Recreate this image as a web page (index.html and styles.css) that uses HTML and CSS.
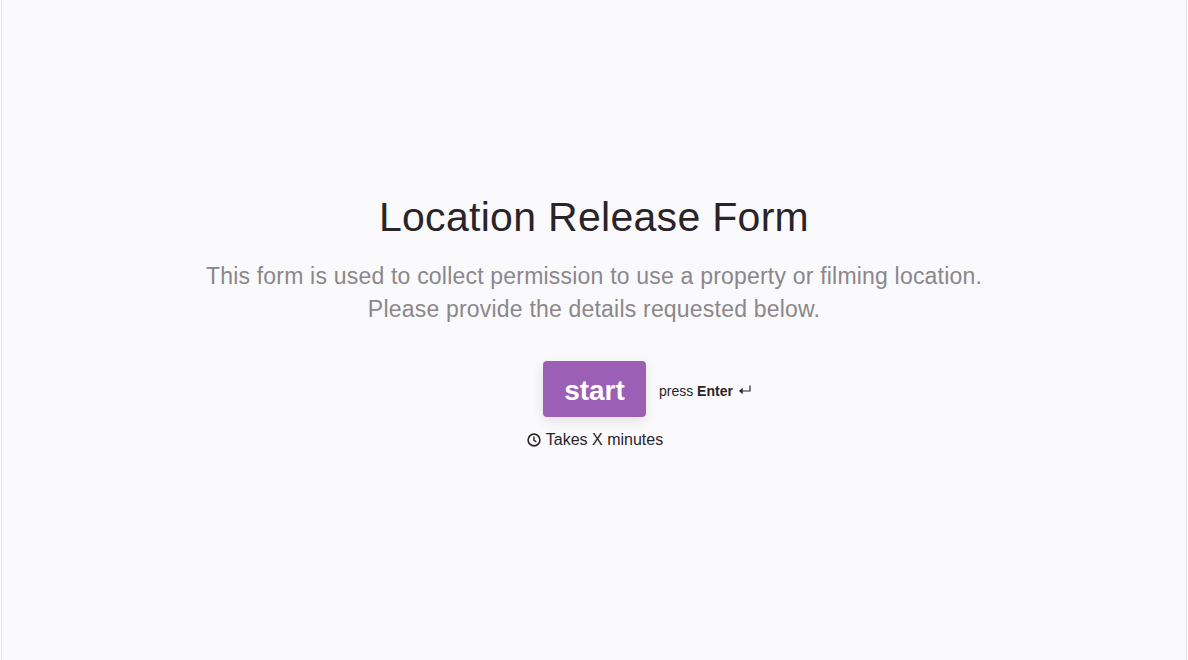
FILE: index.html
```html
<!DOCTYPE html>
<html lang="en">
<head>
    <meta charset="UTF-8">
    <title>Location Release Form</title>
    <link rel="stylesheet" href="styles.css">
</head>
<body>
    <div class="frame">
        <div class="welcome">
            <h1 class="title">Location Release Form</h1>
            <p class="description">This form is used to collect permission to use a property or filming location.<br>Please provide the details requested below.</p>
            <div class="action">
                <button class="start-btn" type="button">start</button>
                <div class="hint">
                    <span>press <b>Enter</b></span>
                    <svg class="enter-icon" width="13" height="11" viewBox="0 0 13 11" fill="none" stroke="#2a2328" stroke-width="1.2">
                        <path d="M12 0.5V6H2"/>
                        <path d="M4.6 2.8L1 6L4.6 9.2" fill="#2a2328" stroke="none"/>
                    </svg>
                </div>
            </div>
            <div class="time">
                <svg class="clock-icon" width="14" height="14" viewBox="0 0 14 14" fill="none" stroke="#2a2328" stroke-width="1.6">
                    <circle cx="7" cy="7" r="5.9"/>
                    <path d="M7 3.6V7.3L9.4 8.8" stroke-width="1.4"/>
                </svg>
                <span>Takes X minutes</span>
            </div>
        </div>
    </div>
</body>
</html>
```

FILE: styles.css
```css
* {
    margin: 0;
    padding: 0;
    box-sizing: border-box;
}

body {
    width: 100vw;
    height: 100vh;
    padding: 0 1px;
    background: #fafafc;
    font-family: "Liberation Sans", Arial, sans-serif;
    color: #2a2328;
    overflow: hidden;
}

.frame {
    width: 100%;
    height: 100%;
    padding-top: 192px;
    display: flex;
    justify-content: center;
    border-left: 1px solid #e6e6e9;
    border-right: 1px solid #e6e6e9;
}

.welcome {
    display: flex;
    flex-direction: column;
    align-items: center;
}

.title {
    font-size: 41px;
    line-height: 50px;
    font-weight: 400;
    letter-spacing: 0.3px;
}

.description {
    margin-top: 18px;
    font-size: 23px;
    line-height: 33px;
    letter-spacing: 0.2px;
    text-align: center;
    color: #8b878a;
}

.action {
    margin-top: 35px;
    margin-left: 1px;
    position: relative;
}

.start-btn {
    display: block;
    width: 103px;
    height: 56px;
    background: #9b60b5;
    border: none;
    border-radius: 4px;
    box-shadow: 0 4px 12px rgba(60, 40, 70, 0.12);
    color: #fff;
    font-family: inherit;
    font-size: 28px;
    font-weight: 700;
    padding-top: 3px;
}

.hint {
    position: absolute;
    left: 116px;
    top: 2px;
    height: 56px;
    display: flex;
    align-items: center;
    gap: 5px;
    font-size: 14px;
    white-space: nowrap;
}

.enter-icon {
    display: block;
    margin-top: -2px;
}

.time {
    margin-top: 13px;
    margin-left: 2px;
    display: flex;
    align-items: center;
    gap: 5px;
    font-size: 16px;
    line-height: 20px;
}

.clock-icon {
    display: block;
}
```
